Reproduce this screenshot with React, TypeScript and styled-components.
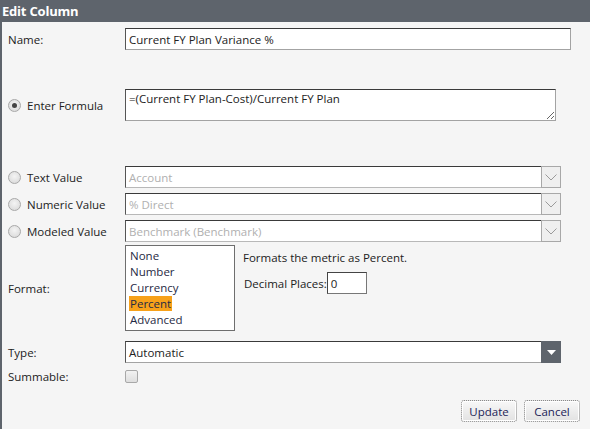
import React from "react";
import styled, { createGlobalStyle } from "styled-components";

const GlobalStyle = createGlobalStyle`
    html, body {
        margin: 0;
        padding: 0;
        background: #f5f5f5;
    }
    body {
        font-family: "Open Sans", "Noto Sans", "Liberation Sans", sans-serif;
        font-size: 11.5px;
        color: #222;
    }
`;

const fieldBorder = `
    border: 1px solid #a3a3a3;
    border-top-color: #3a3a3a;
    border-left-color: #555;
`;

/*
dialog shell -> title bar, body
*/
const Dialog = styled.div`
    width: 590px;
    height: 429px;
    display: flex;
    flex-direction: column;
    background: #f5f5f5;
    overflow: hidden;
`;

const TitleBar = styled.div`
    height: 22px;
    flex-shrink: 0;
    display: flex;
    align-items: center;
    padding-left: 2px;
    background: #5e646c;
    color: #fff;
    font-weight: bold;
    font-size: 13px;
    letter-spacing: -0.2px;
`;

const Body = styled.div`
    flex: 1;
    display: flex;
    flex-direction: column;
    padding: 6px 0 0 8px;
    border-left: 2px solid #5e646c;
    box-sizing: border-box;
`;

/*
one form row: label column + field column
*/
const Row = styled.div<{ $top?: number; $h?: number }>`
    display: flex;
    align-items: center;
    margin-top: ${(p) => p.$top ?? 0}px;
    min-height: ${(p) => p.$h ?? 22}px;
`;

const Label = styled.div`
    width: 117px;
    flex-shrink: 0;
    display: flex;
    align-items: center;
    gap: 6px;
    margin-left: -2px;
`;

const Radio = styled.span<{ $on?: boolean }>`
    width: 11px;
    height: 11px;
    border-radius: 50%;
    border: 1px solid #a8a8a8;
    background: radial-gradient(circle at 50% 40%, #f4f4f4, #d6d6d6);
    display: inline-flex;
    align-items: center;
    justify-content: center;
    flex-shrink: 0;

    &::after {
        content: "";
        display: ${(p) => (p.$on ? "block" : "none")};
        width: 5px;
        height: 5px;
        border-radius: 50%;
        background: #444;
    }
`;

const TextInput = styled.div<{ $w: number }>`
    width: ${(p) => p.$w}px;
    height: 22px;
    box-sizing: border-box;
    ${fieldBorder};
    background: #fff;
    padding: 0 3px;
    display: flex;
    align-items: center;
    white-space: nowrap;
`;

const Formula = styled.textarea`
    width: 431px;
    height: 32px;
    box-sizing: border-box;
    ${fieldBorder};
    background: #fff;
    padding: 1px 3px;
    font: inherit;
    color: #222;
    resize: both;
    outline: none;
`;

/* combo box: text part + arrow button */
const Combo = styled.div`
    width: 436px;
    height: 22px;
    display: flex;
`;

const ComboText = styled.div<{ $disabled?: boolean }>`
    flex: 1;
    box-sizing: border-box;
    ${fieldBorder};
    border-right: none;
    border-bottom-color: ${(p) => (p.$disabled ? "#b8b8b8" : "#a3a3a3")};
    background: #fff;
    padding: 0 3px;
    display: flex;
    align-items: center;
    color: ${(p) => (p.$disabled ? "#b0b0b0" : "#222")};
`;

const ComboButton = styled.div<{ $dark?: boolean }>`
    width: 20px;
    box-sizing: border-box;
    border: 1px solid ${(p) => (p.$dark ? "#5e646c" : "#a8a8a8")};
    background: ${(p) => (p.$dark ? "#5e646c" : "#efefef")};
    display: flex;
    align-items: center;
    justify-content: center;
`;

const FormatArea = styled.div`
    display: flex;
    gap: 8px;
`;

const ListBox = styled.div`
    width: 110px;
    height: 86px;
    box-sizing: border-box;
    border: 1px solid #6e6e6e;
    background: #fff;
    padding: 2px 0 0 4px;
    display: flex;
    flex-direction: column;
`;

const ListItem = styled.div`
    line-height: 16px;
    height: 16px;
    color: #1f2a44;
`;

const Selected = styled.span`
    background: #f7a11a;
    padding: 0 1px;
    margin-left: -1px;
`;

const FormatInfo = styled.div`
    display: flex;
    flex-direction: column;
    padding-top: 5px;
    gap: 7px;
`;

const Decimal = styled.div`
    display: flex;
    align-items: center;
    padding-left: 1px;
`;

const SmallInput = styled.div`
    width: 40px;
    height: 22px;
    box-sizing: border-box;
    border: 1px solid #777;
    border-top-color: #444;
    border-left-color: #444;
    background: #fff;
    padding: 0 3px;
    display: flex;
    align-items: center;
`;

const Check = styled.span`
    width: 11px;
    height: 11px;
    border: 1px solid #a8a8a8;
    border-radius: 2px;
    background: linear-gradient(#f2f2f2, #dedede);
`;

const Buttons = styled.div`
    display: flex;
    justify-content: flex-end;
    gap: 7px;
    margin-top: 14px;
    padding-right: 10px;
`;

const Button = styled.button`
    width: 56px;
    height: 22px;
    padding: 0;
    font: inherit;
    color: #1c2357;
    border: 1px dotted #8a8a8a;
    border-radius: 3px;
    background: linear-gradient(#f8f8f8, #e2e2e2);
    box-shadow: inset 0 0 0 1px #fff;
`;

const Chevron = () => (
    <svg width="12" height="7" viewBox="0 0 12 7">
        <path d="M0.5 0.5 L6 6 L11.5 0.5" fill="none" stroke="#9a9a9a" strokeWidth="1" />
    </svg>
);

const Caret = () => (
    <svg width="9" height="5" viewBox="0 0 9 5">
        <path d="M0 0 H9 L4.5 5 Z" fill="#fff" />
    </svg>
);

const sources = [
    { label: "Text Value", value: "Account" },
    { label: "Numeric Value", value: "% Direct" },
    { label: "Modeled Value", value: "Benchmark (Benchmark)" },
];

const formats = ["None", "Number", "Currency", "Percent", "Advanced"];

export default function App() {
    return (
        <Dialog>
            <GlobalStyle />
            <TitleBar>Edit Column</TitleBar>
            <Body>
                <Row>
                    <Label>Name:</Label>
                    <TextInput $w={446}>Current FY Plan Variance %</TextInput>
                </Row>

                <Row $top={39} $h={32}>
                    <Label>
                        <Radio $on />
                        Enter Formula
                    </Label>
                    <Formula defaultValue="=(Current FY Plan-Cost)/Current FY Plan" />
                </Row>

                {sources.map((s, i) => (
                    <Row key={s.label} $top={i === 0 ? 45 : 5}>
                        <Label>
                            <Radio />
                            {s.label}
                        </Label>
                        <Combo>
                            <ComboText $disabled>{s.value}</ComboText>
                            <ComboButton>
                                <Chevron />
                            </ComboButton>
                        </Combo>
                    </Row>
                ))}

                <Row $top={3} $h={86}>
                    <Label>Format:</Label>
                    <FormatArea>
                        <ListBox>
                            {formats.map((f) => (
                                <ListItem key={f}>
                                    {f === "Percent" ? <Selected>{f}</Selected> : f}
                                </ListItem>
                            ))}
                        </ListBox>
                        <FormatInfo>
                            <div>Formats the metric as Percent.</div>
                            <Decimal>
                                Decimal Places:
                                <SmallInput>0</SmallInput>
                            </Decimal>
                        </FormatInfo>
                    </FormatArea>
                </Row>

                <Row $top={10}>
                    <Label>Type:</Label>
                    <Combo>
                        <ComboText>Automatic</ComboText>
                        <ComboButton $dark>
                            <Caret />
                        </ComboButton>
                    </Combo>
                </Row>

                <Row $top={3} $h={20}>
                    <Label>Summable:</Label>
                    <Check />
                </Row>

                <Buttons>
                    <Button>Update</Button>
                    <Button>Cancel</Button>
                </Buttons>
            </Body>
        </Dialog>
    );
}
